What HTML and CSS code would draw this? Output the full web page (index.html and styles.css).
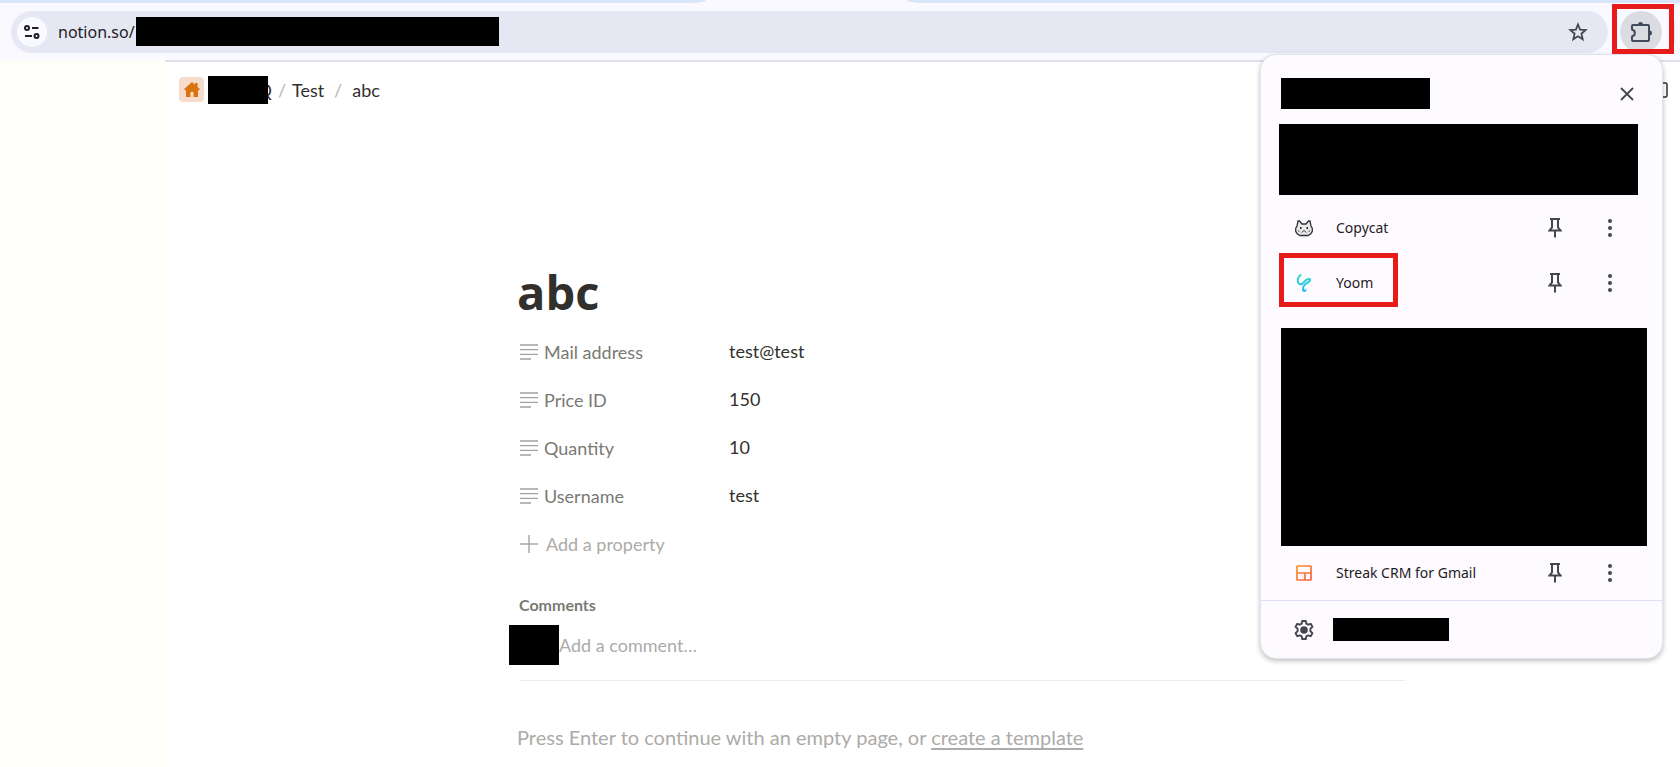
FILE: index.html
```html
<!DOCTYPE html>
<html lang="en">
<head>
<meta charset="utf-8">
<title>abc</title>
<meta name="viewport" content="width=device-width, initial-scale=1">
<link rel="stylesheet" href="styles.css">
</head>
<body>
<svg class="defs" aria-hidden="true">
  <symbol id="pin" viewBox="0 0 14 20"><path d="M2 1h10M4 1v8.500L1.500 12.500h11L10 9.500V1M7 12.500V19.500" fill="none" stroke="currentColor" stroke-width="2"/></symbol>
  <symbol id="dots" viewBox="0 0 4 18"><circle cx="2" cy="2" r="2"/><circle cx="2" cy="9" r="2"/><circle cx="2" cy="16" r="2"/></symbol>
  <symbol id="lines" viewBox="0 0 18 16"><path d="M0 1h18M0 5.700h18M0 10.300h18M0 15h11" fill="none" stroke="currentColor" stroke-width="1.300"/></symbol>
</svg>
<header class="browser">
  <div class="tabs"><div class="tab-left"></div><div class="tab-right"></div></div>
  <div class="toolbar">
    <div class="omnibox">
      <button class="site-info" aria-label="Site information">
        <svg width="16" height="14" viewBox="0 0 16 14" fill="none" stroke="currentColor" stroke-width="2"><circle cx="3" cy="3" r="2"/><path d="M8 3h6.500M1 11h7"/><circle cx="12.500" cy="11" r="2"/></svg>
      </button>
      <span class="url">notion.so/</span>
      <span class="mask mask-url"></span>
      <button class="star" aria-label="Bookmark">
        <svg width="20" height="20" viewBox="0 0 20 20" fill="none" stroke="currentColor" stroke-width="1.800"><path d="M10 2.500l2.100 5.200 5.500.4-4.200 3.600 1.300 5.500-4.700-3-4.700 3 1.300-5.500-4.200-3.600 5.500-.4z"/></svg>
      </button>
    </div>
    <div class="extensions">
      <button class="puzzle" aria-label="Extensions">
        <svg width="22" height="22" viewBox="0 0 22 22"><path d="M3 4h15c.6 0 1 .4 1 1v14c0 .6-.4 1-1 1H3c-.6 0-1-.4-1-1v-3.500c3.800-1 3.800-6 0-7V5c0-.6.4-1 1-1z" fill="none" stroke="currentColor" stroke-width="2" stroke-linejoin="round"/><path d="M8 3.500a2.500 2.500 0 0 1 5 0zM19.500 9.500a2.500 2.500 0 0 1 0 5z" fill="currentColor"/></svg>
      </button>
      <span class="highlight highlight-puzzle"></span>
    </div>
    <span class="separator"></span>
  </div>
</header>
<div class="workspace">
  <aside class="sidebar"></aside>
  <main class="page">
    <nav class="breadcrumb">
      <span class="home"><svg width="16" height="16" viewBox="0 0 16 16"><path fill="#d9730d" d="M8 0l3 2.700V1h2.500v4L16 7.300l-.8 1-1.200-.6V15H9.500v-5h-3v5H2V7.700l-1.200.6-.8-1z"/></svg></span>
      <span class="crumb-root">Q<span class="mask mask-crumb"></span></span>
      <span class="slash">/</span><a href="#">Test</a><span class="slash">/</span><a href="#">abc</a>
      <svg class="layout-icon" width="20" height="16" viewBox="0 0 20 16" fill="none" stroke="currentColor" stroke-width="1.500"><rect x="1" y="1" width="18" height="14" rx="1.500"/></svg>
    </nav>
    <article class="doc">
      <h1>abc</h1>
      <dl class="props">
        <div class="prop"><dt><svg class="lines"><use href="#lines"/></svg>Mail address</dt><dd>test@test</dd></div>
        <div class="prop"><dt><svg class="lines"><use href="#lines"/></svg>Price ID</dt><dd>150</dd></div>
        <div class="prop"><dt><svg class="lines"><use href="#lines"/></svg>Quantity</dt><dd>10</dd></div>
        <div class="prop"><dt><svg class="lines"><use href="#lines"/></svg>Username</dt><dd>test</dd></div>
      </dl>
      <button class="add-prop"><svg width="18" height="18" viewBox="0 0 18 18" fill="none" stroke="currentColor" stroke-width="1.500"><path d="M9 0v18M0 9h18"/></svg>Add a property</button>
      <h2>Comments</h2>
      <div class="comment"><span class="mask mask-avatar"></span><input type="text" aria-label="Add a comment" placeholder="Add a comment…"></div>
      <p class="empty">Press Enter to continue with an empty page, or <a href="#">create a template</a></p>
    </article>
  </main>
</div>
<section class="popup" aria-label="Extensions">
  <div class="popup-head">
    <span class="mask mask-title"></span>
    <button class="icon-btn" aria-label="Close"><svg width="14" height="14" viewBox="0 0 14 14" stroke="currentColor" stroke-width="1.800"><path d="M1 1l12 12M13 1L1 13"/></svg></button>
  </div>
  <span class="mask mask-intro"></span>
  <ul class="ext-list">
    <li class="ext">
      <svg class="ext-icon" viewBox="0 0 18 18"><path d="M2 7L3 2h1.500L7 5h4l2.500-3H15l1 5 1.300 2.500v3L15.500 15l-2.500 1.500H5L2.500 15 .7 12.500v-3z" fill="#e9e9e9" stroke="#333" stroke-width="1.300"/><path d="M5 8h1.500v2H5zM11.500 8H13v2h-1.500z" fill="#222"/><path d="M6.500 13.500L9 11.500l2.500 2M3 12h1.500M13.500 12H15" fill="none" stroke="#444"/></svg>
      <span class="ext-name">Copycat</span>
      <button class="icon-btn" aria-label="Pin Copycat"><svg class="pin"><use href="#pin"/></svg></button>
      <button class="icon-btn" aria-label="More for Copycat"><svg class="dots"><use href="#dots"/></svg></button>
    </li>
    <li class="ext">
      <svg class="ext-icon" viewBox="0 0 18 18" fill="none" stroke="url(#yg)" stroke-width="2" stroke-linecap="round" stroke-linejoin="round"><defs><linearGradient id="yg" gradientUnits="userSpaceOnUse" x1="0" y1="0" x2="0" y2="18"><stop offset="0" stop-color="#3fe0c0"/><stop offset="1" stop-color="#1fb6ff"/></linearGradient></defs><path d="M5.500 1C3.500 2.500 2.500 5.500 3 8c.6 2.800 3.400 3 5.200.8C9.500 7 11.500 5.200 13.800 4.700c1.700-.2 1.700 1.400.6 2.500-1.600 1.700-4.600 2.600-5.700 5-.8 1.800-1.200 4.400.2 4.800.7.1 1.200-.2 1.600-.8"/></svg>
      <span class="ext-name">Yoom</span>
      <button class="icon-btn" aria-label="Pin Yoom"><svg class="pin"><use href="#pin"/></svg></button>
      <button class="icon-btn" aria-label="More for Yoom"><svg class="dots"><use href="#dots"/></svg></button>
      <span class="highlight highlight-ext"></span>
    </li>
  </ul>
  <span class="mask mask-list"></span>
  <ul class="ext-list">
    <li class="ext">
      <svg class="ext-icon" viewBox="0 0 18 18" fill="none" stroke="url(#sg)" stroke-width="1.700"><defs><linearGradient id="sg" gradientUnits="userSpaceOnUse" x1="0" y1="0" x2="18" y2="18"><stop offset="0" stop-color="#fd9a2b"/><stop offset="1" stop-color="#f9513f"/></linearGradient></defs><rect x="2" y="2" width="14" height="14" rx=".5"/><path d="M2 9h14M10 9v7"/></svg>
      <span class="ext-name">Streak CRM for Gmail</span>
      <button class="icon-btn" aria-label="Pin Streak CRM for Gmail"><svg class="pin"><use href="#pin"/></svg></button>
      <button class="icon-btn" aria-label="More for Streak CRM for Gmail"><svg class="dots"><use href="#dots"/></svg></button>
    </li>
  </ul>
  <div class="popup-foot">
    <svg width="20" height="20" viewBox="0 0 20 20"><path d="M8.200 1h3.600l.5 2.700 1.800 1 2.600-.9 1.800 3.100-2.100 1.800v2.600l2.100 1.800-1.800 3.100-2.600-.9-1.800 1-.5 2.700H8.200l-.5-2.700-1.800-1-2.600.9-1.800-3.100 2.100-1.800V8.700L1.500 6.900l1.800-3.100 2.600.9 1.800-1z" fill="none" stroke="currentColor" stroke-width="1.900" stroke-linejoin="round"/><circle cx="10" cy="10" r="3.800" fill="currentColor"/></svg>
    <span class="mask mask-foot"></span>
  </div>
</section>
</body>
</html>
```
FILE: styles.css
```css
* { box-sizing: border-box; }
body {
  margin: 0;
  min-height: 100vh;
  display: flex;
  flex-direction: column;
  position: relative;
  overflow: hidden;
  background: #fff;
  color: #32302c;
  font-family: Lato, "Liberation Sans", sans-serif;
  font-size: 18px;
}
button {
  display: flex;
  align-items: center;
  border: 0;
  padding: 0;
  background: none;
  color: inherit;
  font: inherit;
}
svg { flex: none; }
.defs { position: absolute; width: 0; height: 0; }
.mask { display: block; flex: none; background: #000; }
.highlight { position: absolute; border: 5px solid #e81b1b; }

.browser { background: #faf9ff; }
.tabs { display: flex; justify-content: space-between; height: 3px; }
.tab-left { width: 42%; background: #d9e5f8; border-bottom-right-radius: 16px 3px; }
.tab-right { width: 46%; background: #d9e5f8; border-bottom-left-radius: 16px 3px; }
.toolbar {
  display: flex;
  align-items: center;
  height: 57px;
  padding: 0 5px 0 11px;
}
.omnibox {
  display: flex;
  align-items: center;
  flex: 1;
  height: 42px;
  padding: 0 20px 0 6px;
  border-radius: 21px;
  background: #e5e8f3;
}
.site-info {
  justify-content: center;
  width: 30px;
  height: 30px;
  border-radius: 50%;
  background: #faf9ff;
  color: #1f2024;
}
.url {
  width: 89px;
  padding-left: 11px;
  font-family: "Noto Sans", sans-serif;
  font-size: 16px;
  color: #1f2024;
}
.mask-url { width: 363px; height: 29px; }
.star { margin-left: auto; color: #44474e; }
.extensions { position: relative; margin: 0 11px 0 12px; }
.puzzle {
  justify-content: center;
  width: 42px;
  height: 42px;
  border-radius: 50%;
  background: #dadce2;
  color: #424b5c;
}
.highlight-puzzle { z-index: 2; top: -7px; left: -8px; width: 62px; height: 50px; }
.separator { width: 2px; height: 20px; background: #d9e5f8; }

.workspace { display: flex; flex: 1; }
.sidebar { flex: none; width: 165px; background: #fffef8; }
.page { flex: 1; border-top: 2px solid #dee1ea; }
.breadcrumb {
  display: flex;
  align-items: center;
  height: 55px;
  padding: 0 12px 0 14px;
}
.breadcrumb a { color: inherit; text-decoration: none; }
.home {
  display: flex;
  align-items: center;
  justify-content: center;
  width: 25px;
  height: 25px;
  margin-right: 4px;
  border-radius: 4px;
  background: #f6dccc;
}
.crumb-root { position: relative; width: 64px; text-align: right; }
.mask-crumb { position: absolute; top: -3px; left: 0; width: 60px; height: 28px; }
.slash { width: 20px; text-align: center; color: #b5b4b0; }
.breadcrumb a + .slash { width: 28px; }
.layout-icon { margin-left: auto; }
.doc { max-width: 1240px; padding-left: 354px; }
h1 {
  margin: 145px 0 0 -2px;
  font-family: "Open Sans", sans-serif;
  font-size: 47px;
  line-height: 60px;
  font-weight: 700;
}
.props { margin: 6px 0 0; }
.prop { display: flex; align-items: center; height: 48px; }
dt {
  display: flex;
  align-items: center;
  gap: 6px;
  width: 210px;
  padding-left: 1px;
  color: #7a7974;
}
dd { margin: 0; padding-bottom: 2px; }
.lines { width: 18px; height: 16px; color: #a3a29e; }
.add-prop { gap: 8px; height: 48px; padding-left: 1px; color: #acaba8; }
h2 {
  margin: 25px 0 0;
  font-size: 16px;
  line-height: 24px;
  font-weight: 700;
  color: #7a7974;
}
.comment {
  display: flex;
  align-items: center;
  height: 64px;
  margin-bottom: 38px;
  padding-bottom: 8px;
  border-bottom: 1px solid #ebebea;
}
.mask-avatar { width: 50px; height: 40px; margin-left: -10px; }
.comment input {
  flex: 1;
  border: 0;
  padding: 0;
  background: none;
  font: inherit;
  outline: 0;
}
.comment input::placeholder { color: #acaba8; opacity: 1; }
.empty { margin: 0 0 0 -2px; font-size: 20px; line-height: 36px; color: #acaba8; }
.empty a { color: inherit; text-underline-offset: 3px; }

.popup {
  position: absolute;
  top: 54px;
  right: 17px;
  width: 403px;
  border: 1px solid #e1e4ee;
  border-radius: 16px;
  background: #fdfbff;
  box-shadow: 0 2px 5px rgba(0, 0, 0, .25);
  color: #44474e;
  font-family: "Noto Sans", sans-serif;
  font-size: 14px;
}
.popup-head {
  display: flex;
  align-items: center;
  justify-content: space-between;
  padding: 23px 20px 15px;
}
.icon-btn { justify-content: center; width: 30px; height: 30px; }
.mask-title { width: 149px; height: 31px; }
.mask-intro { height: 71px; margin: 0 24px 0 18px; }
.ext-list { margin: 0; padding: 0; list-style: none; }
.ext {
  position: relative;
  display: flex;
  align-items: center;
  height: 55px;
  padding: 0 37px 0 34px;
}
.mask-intro + .ext-list { padding: 5px 0 18px; }
.ext-icon { width: 18px; height: 18px; }
.ext-name { flex: 1; padding-left: 23px; color: #1f2024; }
.ext .icon-btn + .icon-btn { margin-left: 25px; }
.pin { width: 14px; height: 20px; }
.dots { width: 4px; height: 18px; fill: currentColor; }
.highlight-ext { top: -2px; left: 18px; width: 119px; height: 54px; }
.mask-list { height: 218px; margin: 0 15px 0 20px; }
.mask-list + .ext-list { margin-top: -1px; }
.popup-foot {
  display: flex;
  align-items: center;
  gap: 19px;
  height: 58px;
  padding-left: 33px;
  border-top: 1px solid #dbe1f3;
}
.mask-foot { width: 116px; height: 23px; }
```
